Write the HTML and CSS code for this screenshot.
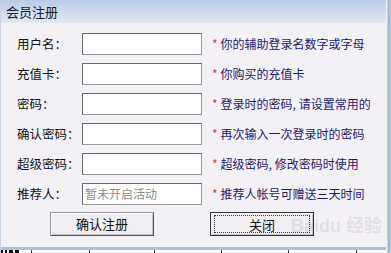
FILE: index.html
```html
<!DOCTYPE html>
<html>
<head>
<meta charset="utf-8">
<link rel="stylesheet" href="styles.css">
</head>
<body>
<div class="window">
  <div class="main">
    <div class="titlebar">会员注册</div>
    <div class="content">
      <div class="form">
        <div class="label">用户名：</div>
        <div class="input"></div>
        <div class="hint"><span class="star">*</span>你的辅助登录名数字或字母</div>

        <div class="label">充值卡：</div>
        <div class="input"></div>
        <div class="hint"><span class="star">*</span>你购买的充值卡</div>

        <div class="label">密码：</div>
        <div class="input"></div>
        <div class="hint"><span class="star">*</span>登录时的密码, 请设置常用的</div>

        <div class="label">确认密码：</div>
        <div class="input"></div>
        <div class="hint"><span class="star">*</span>再次输入一次登录时的密码</div>

        <div class="label">超级密码：</div>
        <div class="input"></div>
        <div class="hint"><span class="star">*</span>超级密码, 修改密码时使用</div>

        <div class="label">推荐人：</div>
        <div class="input placeholder">暂未开启活动</div>
        <div class="hint"><span class="star">*</span>推荐人帐号可赠送三天时间</div>
      </div>
      <div class="buttons">
        <div class="btn btn-ok">确认注册</div>
        <div class="btn btn-close"><span class="focus">关闭</span></div>
      </div>
      <div class="watermark">Baidu 经验</div>
    </div>
    <div class="bottom-border"></div>
    <div class="strip"></div>
  </div>
  <div class="rightedge"></div>
</div>
</body>
</html>
```

FILE: styles.css
```css
* { box-sizing: border-box; }
html, body { margin: 0; padding: 0; }
body {
  width: 391px;
  height: 253px;
  overflow: hidden;
  font-family: "Noto Sans CJK SC", "Noto Sans", sans-serif;
  font-size: 13px;
  background: #f3f0f5;
}
.window {
  display: flex;
  width: 391px;
  height: 253px;
}
.main {
  flex: 1;
  display: flex;
  flex-direction: column;
  border-left: 1px solid #c8d2e2;
}
.rightedge {
  width: 5px;
  background: linear-gradient(to right, #eef2f7 0, #eef2f7 1px, #9fb4cf 2px, #b6c7dd 5px);
}
.titlebar {
  height: 23px;
  background: linear-gradient(to bottom, #b9cbe3 0%, #cfdbec 55%, #e2e9f3 100%);
  color: #1b1b1b;
  padding-left: 5px;
  line-height: 24px;
  font-size: 13px;
}
.content {
  position: relative;
  flex: 1;
  background: #f4f1f6;
  padding: 10px 0 0 16px;
}
.form {
  display: grid;
  grid-template-columns: 65px 120px auto;
  grid-auto-rows: 22px;
  row-gap: 8px;
  align-items: center;
}
.label {
  color: #111;
  font-size: 12.5px;
  line-height: 22px;
}
.input {
  height: 22px;
  background: #fff;
  border: 1px solid #6b6b6b;
  border-right-color: #9a9a9a;
  border-bottom-color: #9a9a9a;
}
.placeholder {
  color: #8e8e8e;
  font-size: 12px;
  line-height: 20px;
  padding-left: 2px;
}
.hint {
  color: #1d1b6b;
  font-size: 12px;
  padding-left: 10px;
  line-height: 22px;
  white-space: nowrap;
}
.star {
  color: #c84040;
  margin-right: 3px;
}
.buttons {
  display: flex;
  margin-top: 7px;
  padding-left: 33px;
}
.btn {
  width: 104px;
  height: 24px;
  background: #f0eef0;
  border: 1px solid #555;
  border-top-color: #9a9a9a;
  border-left-color: #9a9a9a;
  box-shadow: inset 1px 1px 0 #fff, inset -1px -1px 0 #c2c0c2;
  text-align: center;
  line-height: 22px;
  color: #111;
  font-size: 13px;
}
.btn-close {
  margin-left: 56px;
  border: 1px solid #333;
  padding: 2px 3px;
}
.focus {
  display: block;
  height: 18px;
  line-height: 17px;
  border: 1px dotted #333;
}
.watermark {
  position: absolute;
  left: 290px;
  top: 188px;
  color: rgba(180, 180, 185, 0.3);
  font-size: 18px;
  font-weight: bold;
  font-family: "Liberation Sans", "Noto Sans CJK SC", sans-serif;
  pointer-events: none;
}
.bottom-border {
  height: 3px;
  background: #a9c3dc;
}
.strip {
  height: 3px;
  background:
    linear-gradient(to right,
      #111 0, #111 2px, #fff 2px, #fff 4px, #111 4px, #111 6px, #fff 6px, #fff 8px,
      #111 8px, #111 12px, #fff 12px, #fff 14px, #111 14px, #111 18px, #fff 18px, #fff 30px,
      #333 30px, #333 31px, #fff 31px, #fff 88px, #333 88px, #333 89px, #fff 89px, #fff 153px,
      #333 153px, #333 154px, #fff 154px, #fff 220px, #333 220px, #333 221px, #fff 221px, #fff 287px,
      #333 287px, #333 288px, #fff 288px, #fff 355px, #333 355px, #333 356px, #fff 356px);
}
```
